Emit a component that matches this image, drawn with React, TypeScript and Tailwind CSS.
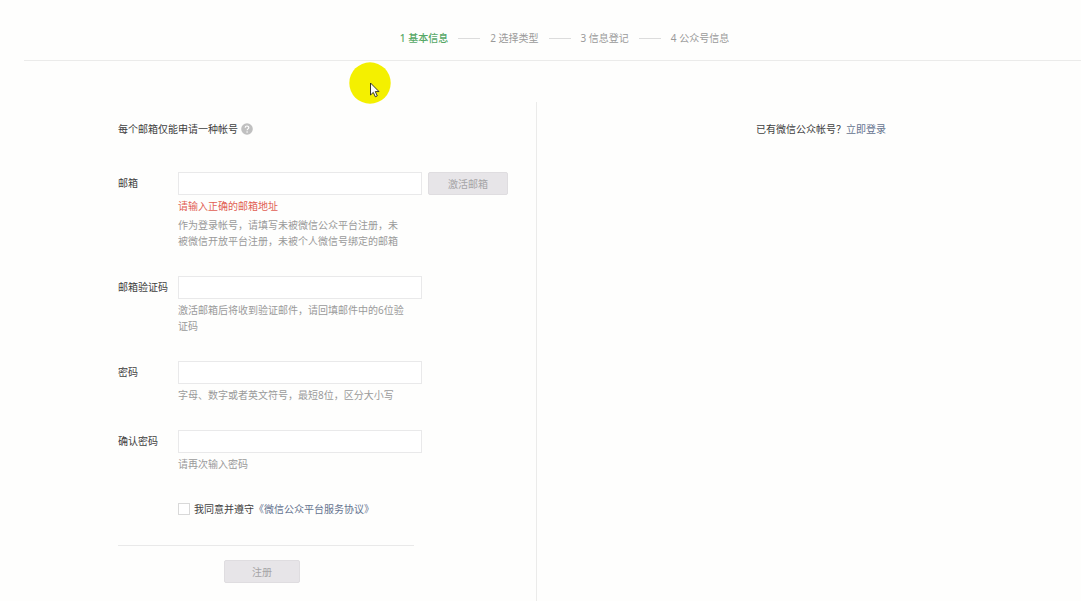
import { Fragment, useState } from "react"

interface IField {
	id: string
	label: string
	type: string
	error?: string
	hint: string
	action?: string
}

const steps = ['基本信息', '选择类型', '信息登记', '公众号信息'];

const fields: IField[] = [
	{
		id: 'email',
		label: '邮箱',
		type: 'email',
		error: '请输入正确的邮箱地址',
		hint: '作为登录帐号，请填写未被微信公众平台注册，未被微信开放平台注册，未被个人微信号绑定的邮箱',
		action: '激活邮箱'
	},
	{ id: 'code', label: '邮箱验证码', type: 'text', hint: '激活邮箱后将收到验证邮件，请回填邮件中的6位验证码' },
	{ id: 'password', label: '密码', type: 'password', hint: '字母、数字或者英文符号，最短8位，区分大小写' },
	{ id: 'confirm', label: '确认密码', type: 'password', hint: '请再次输入密码' }
];

const Steps = () => (
	<header className="flex h-[61px] items-center justify-center gap-[10px] border-b border-[#ebebea] pt-4 text-[#9a9a9a]">
		{steps.map((step, i) => (
			<Fragment key={step}>
				{i > 0 && <span className="h-px w-[22px] bg-[#dcdcdc]" />}
				<span className={i === 0 ? 'font-medium text-[#56a866]' : ''}>{i + 1} {step}</span>
			</Fragment>
		))}
	</header>
)

const Field = ({ field }: { field: IField }) => {
	const { id, label, type, error, hint, action } = field;
	return (
		<div className="mb-[27px] flex items-start">
			<label htmlFor={id} className="w-[60px] shrink-0 pt-[3px]">{label}</label>
			<div>
				<div className="flex gap-[6px]">
					<input id={id} type={type} autoComplete="off" className="h-[23px] w-[244px] border border-[#e9e9ea] bg-white px-2 outline-none" />
					{action && (
						<button type="button" className="h-[23px] w-20 rounded-xs border border-[#dfdde0] bg-[#e7e5e8] text-[#a5a4a6]">{action}</button>
					)}
				</div>
				{error && <p className="mt-[3px] text-[#e15f54]">{error}</p>}
				<p className="mt-[3px] max-w-[228px] text-[#9a9a9a]">{hint}</p>
			</div>
		</div>
	)
}

// Mouse pointer with its highlight
const Pointer = () => (
	<svg className="pointer-events-none absolute top-[62px] left-[349px]" width="42" height="42" viewBox="0 0 42 42" aria-hidden="true">
		<circle cx="21" cy="21" r="20.7" fill="#f4f000" />
		<path d="M21.5 21v12l2.8-2.6 2 4.4 2-.9-2-4.3h3.7z" fill="#fff" stroke="#222" strokeWidth="0.9" strokeLinejoin="round" />
	</svg>
)

const App = () => {

	const [agree, setAgree] = useState(false)

	return (
		<div className="relative flex min-h-screen flex-col overflow-hidden bg-[#fefefd] font-['Noto_Sans','Noto_Sans_CJK_SC',sans-serif] text-[10px] leading-4 text-[#404040]">
			<div className="-mr-6 ml-6 flex flex-1 flex-col">
				<Steps />
				<main className="flex flex-1 pt-[41px]">
					<form onSubmit={e => e.preventDefault()} className="w-[513px] shrink-0 border-r border-[#ebebea] pt-[19px] pl-[94px]">
						<p className="mb-[35px] flex items-center gap-[3px]">
							每个邮箱仅能申请一种帐号
							<svg width="12" height="12" viewBox="0 0 12 12" aria-hidden="true">
								<circle cx="6" cy="6" r="5.8" fill="#c0c0c0" />
								<path d="M4.2 4.8c0-2.4 3.6-2.3 3.6-.2 0 1.3-1.7 1.3-1.7 2.7" fill="none" stroke="#fff" strokeWidth="1.2" />
								<circle cx="6.1" cy="9" r="0.8" fill="#fff" />
							</svg>
						</p>

						{fields.map(field => <Field key={field.id} field={field} />)}

						<div className="flex items-center pt-[2px] pl-[60px]">
							<input id="agree" type="checkbox" checked={agree} onChange={e => setAgree(e.target.checked)} className="mr-1 size-3 appearance-none border border-[#d9d9d9] bg-white checked:bg-[#56a866]" />
							<label htmlFor="agree">我同意并遵守</label>
							<a href="#agreement" className="text-[#65738f]">《微信公众平台服务协议》</a>
						</div>

						<div className="mt-7 w-[296px] border-t border-[#e9e9e9] pt-[14px] pl-[106px]">
							<button type="submit" className="h-[23px] w-[76px] rounded-xs border border-[#dfdde0] bg-[#e7e5e8] text-[#a5a4a6]">注册</button>
						</div>
					</form>

					<aside className="flex-1 pt-[19px] text-center">
						已有微信公众帐号？<a href="#login" className="text-[#65738f]">立即登录</a>
					</aside>
				</main>
			</div>
			<Pointer />
		</div>
	)
}

export default App
